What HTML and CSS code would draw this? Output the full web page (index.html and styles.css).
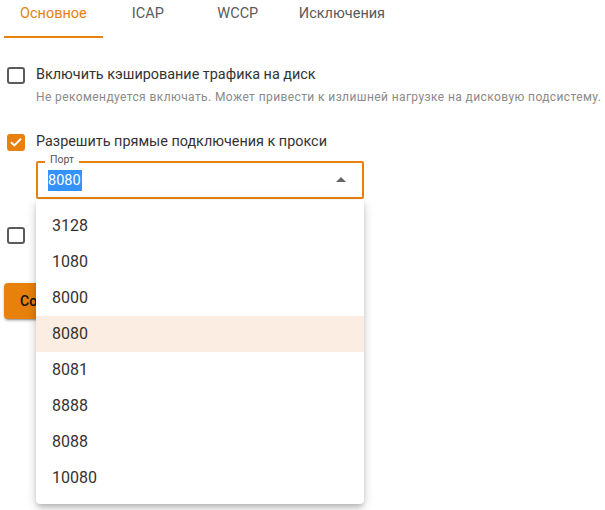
FILE: index.html
```html
<!DOCTYPE html>
<html lang="ru">
<head>
<meta charset="utf-8">
<link rel="stylesheet" href="styles.css">
</head>
<body>
<div class="page">
  <div class="tabs">
    <div class="tab active">Основное</div>
    <div class="tab">ICAP</div>
    <div class="tab">WCCP</div>
    <div class="tab">Исключения</div>
  </div>

  <div class="field">
    <label class="check-row">
      <span class="box"></span>
      <span class="label">Включить кэширование трафика на диск</span>
    </label>
    <div class="helper">Не рекомендуется включать. Может привести к излишней нагрузке на дисковую подсистему.</div>
  </div>

  <div class="field field-2">
    <label class="check-row">
      <span class="box checked">
        <svg viewBox="0 0 18 18" width="18" height="18"><path d="M4 9.2 L7.4 12.4 L14 5.6" fill="none" stroke="#fff" stroke-width="2"/></svg>
      </span>
      <span class="label">Разрешить прямые подключения к прокси</span>
    </label>
    <div class="select">
      <span class="select-label">Порт</span>
      <span class="select-value">8080</span>
      <span class="arrow"></span>
      <ul class="menu">
        <li>3128</li>
        <li>1080</li>
        <li>8000</li>
        <li class="hover">8080</li>
        <li>8081</li>
        <li>8888</li>
        <li>8088</li>
        <li>10080</li>
      </ul>
    </div>
  </div>

  <div class="field field-3">
    <label class="check-row">
      <span class="box"></span>
    </label>
  </div>

  <button class="save">Сохранить</button>
</div>
</body>
</html>
```

FILE: styles.css
```css
* { box-sizing: border-box; }
html, body { margin: 0; padding: 0; background: #fff; }
body {
  font-family: Roboto, "Liberation Sans", Arial, sans-serif;
  color: #333;
}
.page { padding-left: 4px; width: 605px; height: 510px; overflow: hidden; }

.tabs { display: flex; height: 38px; }
.tab {
  min-width: 90px;
  padding: 5px 16px 0;
  text-align: center;
  font-size: 14.5px;
  line-height: 18px;
  font-weight: 400;
  color: #5a5a5a;
  height: 38px;
}
.tab.active {
  color: #e8800c;
  border-bottom: 2px solid #e8800c;
}

.field { margin-top: 25px; }
.field-2 { margin-top: 23px; }
.field-3 { margin-top: 24px; }

.check-row { display: flex; align-items: center; height: 24px; }
.box {
  width: 18px; height: 17px;
  margin: 0 11px 0 3px;
  border: 2px solid #5a5a5a;
  border-radius: 3px;
  flex: none;
  display: flex; align-items: center; justify-content: center;
}
.box.checked { background: #e8800c; border-color: #e8800c; }
.box svg { display: block; flex: none; }
.label { font-size: 14.4px; line-height: 24px; color: #333; }

.helper {
  padding-left: 32px;
  font-size: 12px;
  line-height: 20px;
  color: #8a8a8a;
  letter-spacing: 0.4px;
  white-space: nowrap;
}

.select {
  position: relative;
  margin: 7px 0 0 32px;
  width: 328px;
  height: 38px;
  border: 2px solid #e8800c;
  border-radius: 2px;
  padding: 6px 10px;
  display: flex;
  align-items: center;
}
.select-label {
  position: absolute;
  left: 7px; top: -9px;
  padding: 0 5px;
  background: #fff;
  font-size: 10.5px;
  line-height: 12px;
  color: #555;
}
.select-value {
  background: #3392fb;
  color: #fff;
  font-size: 14.5px;
  line-height: 21px;
  padding: 0 1px 0 0;
}
.arrow {
  position: absolute;
  right: 16px; top: 14px;
  width: 0; height: 0;
  border-left: 5px solid transparent;
  border-right: 5px solid transparent;
  border-bottom: 5px solid #666;
}

.menu {
  position: absolute;
  top: 37px; left: -2px;
  width: 328px;
  margin: 0;
  padding: 8px 0;
  list-style: none;
  background: #fff;
  border-radius: 0 0 4px 4px;
  box-shadow: 0 3px 5px -1px rgba(0,0,0,0.2), 0 6px 10px 0 rgba(0,0,0,0.1), 0 1px 14px 0 rgba(0,0,0,0.08);
  z-index: 10;
}
.menu li {
  height: 36px;
  line-height: 36px;
  padding-left: 16px;
  font-size: 16px;
  color: #333;
}
.menu li.hover { background: #fbede1; }

.save {
  margin-top: 36px;
  height: 36px;
  padding: 0 16px;
  border: none;
  border-radius: 4px;
  background: #e8800c;
  color: #111;
  font-family: Roboto, "Liberation Sans", Arial, sans-serif;
  font-size: 14px;
  font-weight: 500;
  box-shadow: 0 3px 1px -2px rgba(0,0,0,0.2), 0 2px 2px 0 rgba(0,0,0,0.14), 0 1px 5px 0 rgba(0,0,0,0.12);
}
```
